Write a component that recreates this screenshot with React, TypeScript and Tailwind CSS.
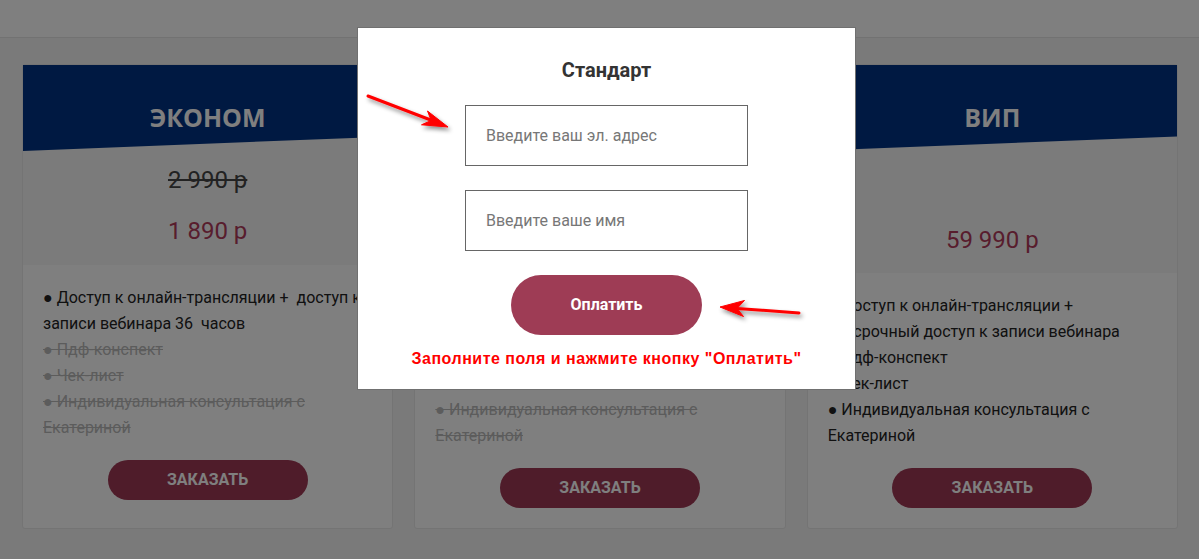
import React from 'react';

type Feature = { text: React.ReactNode; off?: boolean };

type Plan = {
  title: string;
  oldPrice?: string;
  price: string;
  priceTop: string;
  features: Feature[];
};

const plans: Plan[] = [
  {
    title: 'ЭКОНОМ',
    oldPrice: '2 990 р',
    price: '1 890 р',
    priceTop: 'pt-[14px] pb-[19px]',
    features: [
      { text: <>● Доступ к онлайн-трансляции +&nbsp; доступ к<br />записи вебинара 36&nbsp; часов</> },
      { text: '● Пдф-конспект', off: true },
      { text: '● Чек-лист', off: true },
      { text: '● Индивидуальная консультация с Екатериной', off: true },
    ],
  },
  {
    title: 'СТАНДАРТ',
    oldPrice: '5 990 р',
    price: '3 990 р',
    priceTop: 'pt-[22px] pb-[19px]',
    features: [
      { text: '● Доступ к онлайн-трансляции + доступ к записи вебинара 3 месяца' },
      { text: '● Пдф-конспект' },
      { text: '● Чек-лист' },
      { text: '● Индивидуальная консультация с Екатериной', off: true },
    ],
  },
  {
    title: 'ВИП',
    price: '59 990 р',
    priceTop: 'pt-[74px] pb-[18px]',
    features: [
      { text: <>● Доступ к онлайн-трансляции +<br />бессрочный доступ к записи вебинара</> },
      { text: '● Пдф-конспект' },
      { text: '● Чек-лист' },
      { text: '● Индивидуальная консультация с Екатериной' },
    ],
  },
];

const Card: React.FC<{ plan: Plan }> = ({ plan }) => (
  <div className="flex flex-col bg-white border border-[#e8e8e8] rounded-[3px]">
    <div className="bg-[#f6f6f6]">
      <div className="h-[86px] bg-[#003284] [clip-path:polygon(0_0,100%_0,100%_83%,0_100%)] pt-[37px] text-center">
        <h3 className="text-[25px] leading-[30px] font-bold text-white font-['Open_Sans',sans-serif]">
          {plan.title}
        </h3>
      </div>
      <div className={`${plan.priceTop} text-center font-['Roboto',sans-serif] text-[24px] leading-[30px]`}>
        {plan.oldPrice && <div className="text-[#444] line-through mb-[21px]">{plan.oldPrice}</div>}
        <div className="text-[#b03a5a]">{plan.price}</div>
      </div>
    </div>
    <div className="flex-1 flex flex-col px-[20px] pt-[20px] pb-[20px] font-['Roboto',sans-serif] text-[16px] leading-[26px]">
      <ul>
        {plan.features.map((f, i) => (
          <li key={i} className={f.off ? 'text-[#b8b8b8] line-through' : 'text-[#222]'}>
            {f.text}
          </li>
        ))}
      </ul>
      <button className="mx-auto mt-[19px] w-[200px] h-[40px] rounded-full bg-[#9e3854] text-white font-bold text-[16px] uppercase font-['Roboto',sans-serif]">
        Заказать
      </button>
    </div>
  </div>
);

const Arrows: React.FC = () => (
  <svg className="absolute inset-0 w-full h-full pointer-events-none" viewBox="0 0 1199 559">
    <defs>
      <filter id="sh" x="-20%" y="-50%" width="140%" height="200%">
        <feDropShadow dx="2" dy="3" stdDeviation="2" floodColor="#000" floodOpacity="0.45" />
      </filter>
    </defs>
    <g fill="#ff0000" stroke="#ff0000" filter="url(#sh)">
      <line x1="368" y1="96" x2="432" y2="120.5" strokeWidth="3" strokeLinecap="round" />
      <polygon points="448,127 421.5,124.8 431.2,120.5 427.5,111" strokeWidth="1" strokeLinejoin="round" />
      <line x1="799" y1="313" x2="737" y2="308.4" strokeWidth="3" strokeLinecap="round" />
      <polygon points="720,307 744.5,300.5 737,308.4 743.5,316.5" strokeWidth="1" strokeLinejoin="round" />
    </g>
  </svg>
);

const App: React.FC = () => {
  return (
    <div className="relative min-h-screen bg-[#f5f5f5] overflow-hidden">
      <div className="h-[38px] bg-white border-b border-[#e4e4e4]" />
      <main className="grid grid-cols-3 gap-[21px] pl-[22px] pr-[21px] pt-[26px]">
        {plans.map((p) => (
          <Card key={p.title} plan={p} />
        ))}
      </main>

      {/* overlay + modal */}
      <div className="absolute inset-0 bg-black/50">
        <div className="absolute left-[357px] top-[27px] w-[499px] bg-white border border-[#707070] flex flex-col items-center pt-[29px] pb-[20px] font-['Roboto',sans-serif]">
          <h2 className="text-[20px] leading-[26px] font-bold text-[#333]">Стандарт</h2>
          <input
            className="mt-[22px] w-[283px] h-[61px] border border-[#666] px-[20px] text-[16px] outline-none placeholder:text-[#777]"
            placeholder="Введите ваш эл. адрес"
          />
          <input
            className="mt-[24px] w-[283px] h-[61px] border border-[#666] px-[20px] text-[16px] outline-none placeholder:text-[#777]"
            placeholder="Введите ваше имя"
          />
          <button className="mt-[24px] w-[191px] h-[60px] rounded-full bg-[#9e3c55] text-white font-bold text-[16px]">
            Оплатить
          </button>
          <p className="mt-[14px] text-[16px] leading-[20px] font-bold tracking-[0.5px] text-[#f00] font-['Liberation_Sans',sans-serif]">
            Заполните поля и нажмите кнопку "Оплатить"
          </p>
        </div>
        <Arrows />
      </div>
    </div>
  );
};

export default App;
